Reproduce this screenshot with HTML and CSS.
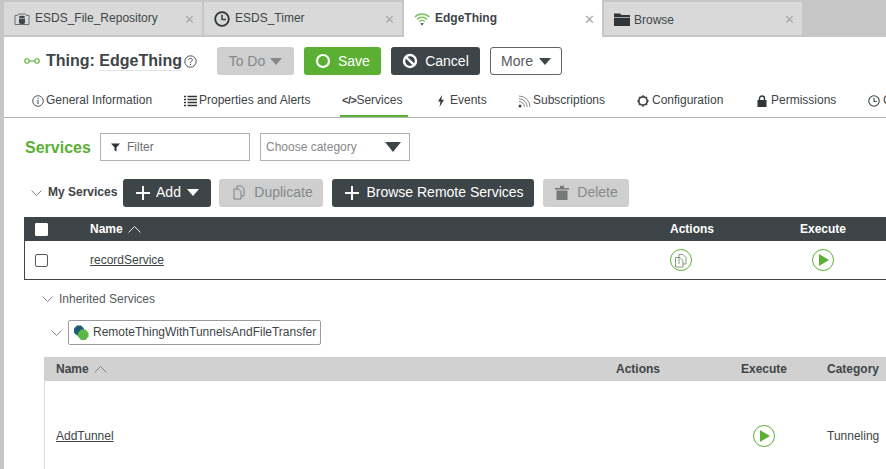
FILE: index.html
```html
<!DOCTYPE html>
<html lang="en">
<head>
<meta charset="utf-8">
<title>EdgeThing</title>
<link rel="stylesheet" href="styles.css">
</head>
<body>
<nav class="tabs">
  <div class="tab">
    <svg class="tab-icon" width="16" height="14" viewBox="0 0 16 14"><path d="M1 3.500h2.500l1-1.500h7l1 1.500H15v9H1z" fill="#d9d9d9" stroke="#6a6e70"/><ellipse cx="8" cy="5" rx="3" ry="1.300" fill="#3e4548"/><path d="M5 6.200v4.600c0 .8 1.300 1.400 3 1.400s3-.6 3-1.400V6.200c-.8.7-5.200.7-6 0z" fill="#3e4548"/></svg>
    <span class="tab-label">ESDS_File_Repository</span><span class="close">✕</span>
  </div>
  <div class="tab">
    <svg class="tab-icon" width="16" height="16" viewBox="0 0 16 16"><circle cx="8" cy="8" r="6.800" fill="none" stroke="#2f3538" stroke-width="1.800"/><path d="M8 3.800V8.500H12" fill="none" stroke="#3a4a3a" stroke-width="1.600"/></svg>
    <span class="tab-label">ESDS_Timer</span><span class="close">✕</span>
  </div>
  <div class="tab active">
    <svg class="tab-icon" width="16" height="14" viewBox="0 0 16 14"><path d="M.8 5a10 10 0 0 1 14.400 0M3 7.400a7 7 0 0 1 10 0M5.200 9.600a4 4 0 0 1 5.600 0" fill="none" stroke="#7cc35c" stroke-width="1.400"/><path d="M6.200 11.200h3.600L8 13.500z" fill="#2f3538"/></svg>
    <span class="tab-label strong">EdgeThing</span><span class="close">✕</span>
  </div>
  <div class="tab">
    <svg class="tab-icon" width="16" height="14" viewBox="0 0 16 14"><path d="M0 1.500h6l1.500 1.500H16v2H0z" fill="#2f3538"/><path d="M0 5.700h16V14H0z" fill="#2f3538"/></svg>
    <span class="tab-label low">Browse</span><span class="close">✕</span>
  </div>
</nav>

<main class="page">
  <header class="title-bar">
    <svg class="thing-icon" width="16" height="6" viewBox="0 0 16 6"><circle cx="3" cy="3" r="2.200" fill="none" stroke="#5bb033" stroke-width="1.100"/><circle cx="13" cy="3" r="2.200" fill="none" stroke="#5bb033" stroke-width="1.100"/><path d="M5 3h6" stroke="#5bb033" stroke-width="1.100"/></svg>
    <h1 class="title">Thing: <span class="title-name">EdgeThing</span></h1>
    <svg class="help" width="13" height="13" viewBox="0 0 13 13"><circle cx="6.500" cy="6.500" r="5.700" fill="none" stroke="#4a4f52"/><path d="M4.700 5.100c0-2.300 3.700-2.300 3.700-.1 0 1.300-1.900 1.300-1.900 2.800" fill="none" stroke="#4a4f52"/><path d="M6.500 8.800v1.200" stroke="#4a4f52"/></svg>
    <button class="btn btn-disabled todo">To Do <span class="caret"></span></button>
    <button class="btn btn-green save"><svg width="16" height="16" viewBox="0 0 16 16"><circle cx="8" cy="8" r="6" fill="none" stroke="#fff" stroke-width="2.200"/></svg>Save</button>
    <button class="btn btn-dark cancel"><svg width="16" height="16" viewBox="0 0 16 16"><circle cx="8" cy="8" r="6" fill="none" stroke="#fff" stroke-width="2.400"/><path d="M3.800 3.800l8.400 8.400" stroke="#fff" stroke-width="2.400"/></svg>Cancel</button>
    <button class="btn btn-outline more">More <span class="caret dark"></span></button>
  </header>

  <div class="nav-row">
    <a class="nav-item w-general"><svg width="12" height="12" viewBox="0 0 12 12"><circle cx="6" cy="6" r="5.300" fill="none" stroke="#3e4548" stroke-width=".9"/><path d="M6 5v4M6 2.800v1.200" stroke="#3e4548"/></svg>General Information</a>
    <a class="nav-item w-props"><svg width="13" height="12" viewBox="0 0 13 12"><path d="M0 1.500h2M3.500 1.500H13M0 4.500h2M3.500 4.500H13M0 7.500h2M3.500 7.500H13M0 10.500h2M3.500 10.500H13" stroke="#2f3538" stroke-width="1.600"/></svg>Properties and Alerts</a>
    <a class="nav-item w-services current"><span class="code-glyph">&lt;/&gt;</span>Services</a>
    <a class="nav-item w-events"><svg width="8" height="12" viewBox="0 0 8 12"><path d="M5 0L1 6.500h2.500L2.500 12 7 4.800H4.300z" fill="#2f3538"/></svg>Events</a>
    <a class="nav-item w-subs"><svg width="13" height="13" viewBox="0 0 13 13"><circle cx="2" cy="11" r="1.500" fill="#3e4548"/><path d="M1 6.500a5.500 5.500 0 0 1 5.500 5.500M1 3.800a8.200 8.200 0 0 1 8.200 8.200M1 1a11 11 0 0 1 11 11" fill="none" stroke="#6a6f72" stroke-width=".8"/></svg>Subscriptions</a>
    <a class="nav-item w-config"><svg width="12" height="12" viewBox="0 0 12 12"><circle cx="6" cy="6" r="4.200" fill="none" stroke="#3e4548" stroke-width="1.800"/><path d="M6 0v1.500M6 10.500V12M0 6h1.500M10.500 6H12M1.800 1.800l1 1M9.200 9.200l1 1M1.800 10.200l1-1M9.200 2.800l1-1" stroke="#3e4548" stroke-width="1.200"/></svg>Configuration</a>
    <a class="nav-item w-perm"><svg width="10" height="12" viewBox="0 0 10 12"><path d="M2.500 5.500V3.500a2.500 2.500 0 0 1 5 0v2" fill="none" stroke="#2f3538" stroke-width="1.400"/><path d="M.5 5h9v7h-9z" fill="#2f3538"/></svg>Permissions</a>
    <a class="nav-item w-change"><svg width="12" height="12" viewBox="0 0 12 12"><circle cx="6" cy="6" r="5.200" fill="none" stroke="#3e4548" stroke-width="1.100"/><path d="M6 2.800v3.700h2.800" fill="none" stroke="#3e4548" stroke-width="1.100"/></svg>Change History</a>
  </div>

  <section class="content">
    <div class="filter-row">
      <h2 class="section-title">Services</h2>
      <div class="field filter"><svg width="9" height="9" viewBox="0 0 9 9"><path d="M0 .5h9L5.500 4.500V8.500L3.500 7.500v-3z" fill="#2f3538"/></svg>Filter</div>
      <div class="field category"><span>Choose category</span><span class="caret big"></span></div>
    </div>

    <div class="action-row">
      <svg class="chev" width="11" height="6" viewBox="0 0 11 6"><path d="M.5.500l5 5 5-5" fill="none" stroke="#5a5f62" stroke-width=".8"/></svg>
      <span class="my-label">My Services</span>
      <button class="btn small btn-dark add"><svg width="16" height="16" viewBox="0 0 16 16"><path d="M8 1v14M1 8h14" stroke="#fff" stroke-width="2"/></svg>Add <span class="caret white"></span></button>
      <button class="btn small btn-disabled dup"><svg width="12" height="15" viewBox="0 0 12 15"><path d="M1 4h3V1h4.500L11 3.500V11H8v3H1z" fill="none" stroke="#7c7f81"/><path d="M4 4h1.500L8 6.500V11" fill="none" stroke="#7c7f81"/></svg>Duplicate</button>
      <button class="btn small btn-dark browse-remote"><svg width="16" height="16" viewBox="0 0 16 16"><path d="M8 1v14M1 8h14" stroke="#fff" stroke-width="2"/></svg>Browse Remote Services</button>
      <button class="btn small btn-disabled del"><svg width="14" height="15" viewBox="0 0 14 15"><path d="M0 3h14v1.500H0zM5 .7h4V3H5zM1.500 5.500h11V15h-11z" fill="#757879"/></svg>Delete</button>
    </div>

    <div class="table own">
      <div class="table-row head dark-head">
        <span class="cell-check"><span class="check filled"></span></span>
        <span class="cell-name">Name <svg width="13" height="7" viewBox="0 0 13 7"><path d="M.5 6.500l6-6 6 6" fill="none" stroke="#fff" stroke-width=".9"/></svg></span>
        <span class="cell-actions">Actions</span>
        <span class="cell-exec">Execute</span>
      </div>
      <div class="table-row body-row">
        <span class="cell-check"><span class="check"></span></span>
        <span class="cell-name"><a class="link">recordService</a></span>
        <span class="cell-actions"><span class="round"><svg width="14" height="15" viewBox="0 0 14 15"><path d="M1.500 4.500h3.500V1.500h4l3 3V11H9v3H1.500z" fill="none" stroke="#7f9c7a"/><path d="M5 4.500h1L9 7.500V11M5 4.500V11" fill="none" stroke="#7f9c7a"/></svg></span></span>
        <span class="cell-exec"><span class="round"><span class="play"></span></span></span>
      </div>
    </div>

    <div class="inherited">
      <div class="inh-head">
        <svg class="chev" width="11" height="6" viewBox="0 0 11 6"><path d="M.5.500l5 5 5-5" fill="none" stroke="#5a5f62" stroke-width=".8"/></svg>
        <span>Inherited Services</span>
      </div>
      <div class="template-row">
        <svg class="chev" width="11" height="6" viewBox="0 0 11 6"><path d="M.5.500l5 5 5-5" fill="none" stroke="#5a5f62" stroke-width=".8"/></svg>
        <div class="template-box">
          <svg width="16" height="16" viewBox="0 0 16 16"><path d="M4 .5h4l3 3v4l-3 3H4l-3-3v-4z" fill="#1f5a78"/><path d="M8 4.500h4.500l3 3.500v3.500l-3 3.500H8l-3-3.500V8z" fill="#5bb848"/></svg>
          <span class="template-name">RemoteThingWithTunnelsAndFileTransfer</span>
        </div>
      </div>
      <div class="table inh">
        <div class="table-row head grey-head">
          <span class="cell-inh-name">Name <svg width="13" height="7" viewBox="0 0 13 7"><path d="M.5 6.500l6-6 6 6" fill="none" stroke="#6a6d6f" stroke-width=".8"/></svg></span>
          <span class="cell-inh-actions">Actions</span>
          <span class="cell-inh-exec">Execute</span>
          <span class="cell-inh-cat">Category</span>
        </div>
        <div class="table-row tall-row">
          <span class="cell-inh-name"><a class="link">AddTunnel</a></span>
          <span class="cell-inh-actions"></span>
          <span class="cell-inh-exec icon-exec"><span class="round"><span class="play"></span></span></span>
          <span class="cell-inh-cat">Tunneling</span>
        </div>
      </div>
    </div>
  </section>
</main>
</body>
</html>
```

FILE: styles.css
```css
* { box-sizing: border-box; }
html, body { margin: 0; height: 100%; overflow: hidden; }
body {
  width: 886px;
  height: 469px;
  background: #c6c6c6;
  padding-left: 4px;
  font-family: "Liberation Sans", Arial, sans-serif;
  color: #3e4548;
  display: flex;
  flex-direction: column;
}
svg { flex: none; display: block; }

.tabs { display: flex; height: 37px; padding-top: 2px; gap: 2px; flex: none; align-items: flex-start; }
.tab {
  width: 198px;
  height: 33px;
  background: #d9d9d9;
  display: flex;
  align-items: center;
  padding: 1px 7px 0 10px;
  font-size: 12px;
  color: #3e4548;
}
.tab.active { background: #fff; height: 37px; margin-top: -2px; padding-top: 1px; }
.tab-icon { margin-right: 5px; }
.tab-label { flex: 1; margin-bottom: 2px; }
.tab-label.strong { font-weight: 700; }
.tab-label.low { margin-bottom: 0; margin-top: 2px; margin-left: -1px; }
.close { color: #a8aaac; font-size: 13px; width: 11px; line-height: 1; }

.page { flex: 1; background: #fff; min-height: 0; overflow: hidden; }

.title-bar { display: flex; align-items: center; height: 28px; margin-top: 10px; padding-left: 20px; }
.thing-icon { margin-right: 6px; }
.title { margin: 0; font-size: 16px; font-weight: 700; color: #3e4548; white-space: nowrap; line-height: 28px; }
.title-name { border-bottom: 1px solid #e2e3e3; padding-bottom: 1px; }
.help { margin-left: 2px; }

.btn {
  font-family: inherit;
  font-size: 14px;
  height: 28px;
  border: 0;
  border-radius: 3px;
  padding: 0;
  display: inline-flex;
  align-items: center;
  justify-content: center;
  flex: none;
  gap: 6px;
}
.btn-disabled { background: #cfcfcf; color: #85888a; }
.btn-green { background: #5bb033; color: #fff; }
.btn-dark { background: #3e4548; color: #fff; }
.btn-outline { background: #fff; border: 1px solid #5d6366; color: #55595c; }
.todo { width: 77px; margin-left: 20px; gap: 5px; }
.save { width: 77px; margin-left: 10px; gap: 7px; }
.cancel { width: 89px; margin-left: 10px; gap: 7px; }
.more { width: 72px; margin-left: 10px; gap: 6px; }

.caret { width: 0; height: 0; border-left: 6.500px solid transparent; border-right: 6.500px solid transparent; border-top: 7.500px solid #85888a; }
.caret.dark { border-top-color: #3e4548; }
.caret.white { border-top-color: #fff; }
.caret.big { border-left-width: 8px; border-right-width: 8px; border-top-width: 10px; border-top-color: #3e4548; }

.nav-row {
  display: flex;
  height: 43px;
  padding-top: 18px;
  padding-left: 28px;
  border-bottom: 1px solid #b4b6b7;
  font-size: 12px;
  white-space: nowrap;
  overflow: hidden;
}
.nav-item { display: flex; align-items: flex-start; gap: 2px; height: 24px; line-height: 15px; color: #3e4548; flex: none; }
.nav-item svg { margin-top: 1.500px; }
.w-general { width: 152px; }
.w-props { width: 156px; }
.w-services { width: 68px; padding-left: 2px; gap: 0; }
.current { border-bottom: 2px solid #5bb033; }
.code-glyph { font-size: 11px; font-weight: 700; letter-spacing: -.5px; }
.w-events { width: 82px; padding-left: 29px; gap: 5px; }
.w-subs { width: 147px; padding-left: 28px; }
.w-config { width: 120px; gap: 3px; }
.w-perm { width: 111px; gap: 4px; }
.w-change { width: 120px; gap: 3px; }

.content { padding: 15px 0 0 20px; }
.filter-row { display: flex; align-items: flex-start; height: 28px; }
.section-title { margin: 0; font-size: 16px; font-weight: 700; color: #5bb033; width: 76px; height: 28px; padding: 1px 0 0 1px; line-height: 28px; }
.field { height: 28px; width: 150px; border: 1px solid #aeb0b2; font-size: 12px; display: flex; align-items: center; background: #fff; flex: none; }
.filter { padding-left: 10px; gap: 7px; color: #6d7073; }
.category { margin-left: 10px; padding: 0 8px 0 5px; justify-content: space-between; color: #85888a; }

.action-row { display: flex; align-items: center; height: 28px; margin-top: 18px; }
.action-row .chev { margin-left: 7px; margin-right: 6px; }
.my-label { font-size: 12px; font-weight: 700; width: 75px; flex: none; margin-bottom: 2px; }
.small { font-size: 14px; padding-bottom: 2px; }
.small svg { margin-top: 1px; }
.add { width: 88px; gap: 5px; }
.add .caret { margin-left: 1px; }
.dup { width: 104px; margin-left: 8px; gap: 9px; padding-left: 4px; }
.browse-remote { width: 202px; margin-left: 9px; gap: 6px; padding-left: 2px; }
.del { width: 86px; margin-left: 9px; gap: 8px; padding-left: 1px; }

.table-row { display: flex; align-items: center; }
.own { margin-top: 10px; }
.head { height: 24px; font-size: 12px; font-weight: 700; }
.dark-head { background: #3e4548; color: #fff; }
.body-row { height: 39px; border-left: 1px solid #3e4548; border-bottom: 1px solid #3e4548; font-size: 12px; }
.cell-check { width: 66px; padding-left: 11px; flex: none; display: flex; }
.body-row .cell-check { width: 65px; padding-left: 10px; }
.check { width: 13px; height: 13px; border: 1px solid #55595c; border-radius: 2px; background: #fff; display: block; }
.check.filled { border-color: #fff; border-radius: 1px; }
.cell-name { width: 580px; flex: none; display: flex; align-items: center; gap: 5px; }
.cell-actions { width: 130px; flex: none; }
.cell-exec { width: 86px; flex: none; }
.body-row .cell-actions { width: 142px; }
.link { color: #3e4548; text-decoration: underline; }
.round { width: 22px; height: 22px; border-radius: 50%; border: 1px solid #5bb033; background: #fff; display: flex; align-items: center; justify-content: center; }
.play { width: 0; height: 0; margin-left: 2px; border-top: 6px solid transparent; border-bottom: 6px solid transparent; border-left: 10px solid #5bb033; }

.inherited { padding-left: 20px; }
.inh-head { display: flex; align-items: center; height: 15px; margin-top: 11px; font-size: 12px; color: #55595c; gap: 6px; }
.inh-head .chev { margin-left: -2px; }
.template-row { display: flex; align-items: center; margin-top: 14px; gap: 6px; }
.template-row .chev { margin-left: 7px; }
.template-box { display: flex; align-items: center; height: 25px; width: 253px; border: 1px solid #9a9da0; border-radius: 2px; padding-left: 4px; gap: 4px; font-size: 12px; color: #3e4548; white-space: nowrap; }
.template-name { margin-bottom: 2px; }
.inh { margin-top: 12px; }
.grey-head { background: #d1d1d1; color: #3e4548; }
.cell-inh-name { width: 572px; padding-left: 12px; flex: none; display: flex; align-items: center; gap: 5px; }
.cell-inh-actions { width: 125px; flex: none; }
.cell-inh-exec { width: 86px; flex: none; }
.cell-inh-cat { flex: 1; white-space: nowrap; }
.tall-row { height: 110px; border-left: 1px solid #d9dada; font-size: 12px; }
.tall-row .cell-inh-name { width: 571px; padding-left: 11px; }
.icon-exec { padding-left: 12px; }
```
